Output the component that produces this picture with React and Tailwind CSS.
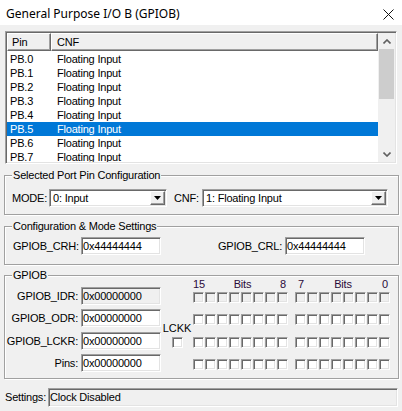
import React from "react";

const SUNKEN =
  "border border-t-[#a0a0a0] border-l-[#a0a0a0] border-r-white border-b-white shadow-[inset_1px_1px_0_#696969,inset_-1px_-1px_0_#e3e3e3]";
const RAISED =
  "border border-t-white border-l-white border-r-[#696969] border-b-[#696969] shadow-[inset_-1px_-1px_0_#a0a0a0]";

function Field({ w, text, gray, h = "h-[18px]" }) {
  return (
    <div
      className={`${w} ${h} ${SUNKEN} ${gray ? "bg-[#f0f0f0]" : "bg-white"} flex items-center pl-[1px] overflow-hidden whitespace-nowrap`}
    >
      {text}
    </div>
  );
}

function Combo({ w, text }) {
  return (
    <div className={`${w} h-[18px] ${SUNKEN} bg-white flex items-center p-[1px]`}>
      <span className="flex-1 pl-[2px] whitespace-nowrap">{text}</span>
      <div className={`w-[15px] h-full ${RAISED} bg-[#f0f0f0] flex items-center justify-center`}>
        <svg width="7" height="4" viewBox="0 0 7 4">
          <path d="M0 0H7L3.5 4Z" fill="#000" />
        </svg>
      </div>
    </div>
  );
}

function Check({ gray }) {
  return (
    <div
      className={`w-[11px] h-[11px] ${SUNKEN} ${gray ? "bg-[#f0f0f0]" : "bg-white"}`}
    />
  );
}

function Bits({ gray }) {
  return (
    <div className="flex gap-[1px]">
      {[0, 1, 2, 3, 4, 5, 6, 7].map((i) => (
        <Check key={i} gray={gray} />
      ))}
    </div>
  );
}

function Group({ title, className, children }) {
  return (
    <div
      className={`relative ml-[4px] w-[395px] border border-[#a0a0a0] shadow-[inset_1px_1px_0_#fff,1px_1px_0_#fff] ${className}`}
    >
      <span className="absolute left-[7px] top-[-7px] bg-[#f0f0f0] px-[1px] leading-[13px] whitespace-nowrap">
        {title}
      </span>
      {children}
    </div>
  );
}

const rows = ["PB.0", "PB.1", "PB.2", "PB.3", "PB.4", "PB.5", "PB.6", "PB.7"];

export default function App() {
  return (
    <div className="w-[402px] h-[411px] bg-[#f0f0f0] font-['Liberation_Sans',Arial,sans-serif] text-[11px] leading-[13px] text-black tracking-[-0.2px] overflow-hidden">
      {/* Title bar */}
      <div className="h-[25px] bg-white flex items-center justify-between pl-[6px] pr-[8px]">
        <span className="font-['Noto_Sans',sans-serif] text-[12px] tracking-normal pt-[2px]">
          General Purpose I/O B (GPIOB)
        </span>
        <svg width="11" height="11" viewBox="0 0 11 11" className="mt-[4px]">
          <path d="M0.5 0.5L10.5 10.5M10.5 0.5L0.5 10.5" stroke="#111" strokeWidth="1" />
        </svg>
      </div>

      {/* List view */}
      <div className={`mt-[6px] ml-[5px] w-[392px] h-[133px] bg-white ${SUNKEN} p-[1px] flex`}>
        <div className="flex-1 flex flex-col overflow-hidden">
          <div className="h-[18px] flex bg-[#f0f0f0] shrink-0">
            <div className={`w-[44px] h-full ${RAISED} flex items-center pl-[4px]`}>Pin</div>
            <div className={`flex-1 h-full ${RAISED} flex items-center pl-[5px]`}>CNF</div>
          </div>
          <div className="pt-[1px]">
            {rows.map((r) => (
              <div
                key={r}
                className={`h-[14px] flex items-center ${r === "PB.5" ? "bg-[#0078d7] text-white" : ""}`}
              >
                <span className="w-[50px] pl-[3px]">{r}</span>
                <span>Floating Input</span>
              </div>
            ))}
          </div>
        </div>
        <div className="w-[17px] bg-[#f0f0f0] flex flex-col">
          <div className="h-[16px] flex items-center justify-center">
            <svg width="8" height="5" viewBox="0 0 8 5">
              <path d="M0.5 4.5L4 1L7.5 4.5" stroke="#606060" strokeWidth="1.6" fill="none" />
            </svg>
          </div>
          <div className="mx-[1px] h-[50px] bg-[#cdcdcd]" />
          <div className="flex-1" />
          <div className="h-[16px] flex items-center justify-center">
            <svg width="8" height="5" viewBox="0 0 8 5">
              <path d="M0.5 0.5L4 4L7.5 0.5" stroke="#606060" strokeWidth="1.6" fill="none" />
            </svg>
          </div>
        </div>
      </div>

      {/* Selected Port Pin Configuration */}
      <Group title="Selected Port Pin Configuration" className="mt-[11px] h-[40px] pt-[13px] pl-[7px]">
        <div className="flex items-center">
          <span className="w-[37px]">MODE:</span>
          <Combo w="w-[118px]" text="0: Input" />
          <span className="ml-[7px] w-[28px]">CNF:</span>
          <Combo w="w-[186px]" text="1: Floating Input" />
        </div>
      </Group>

      {/* Configuration & Mode Settings */}
      <Group title="Configuration & Mode Settings" className="mt-[11px] h-[39px] pt-[10px] pl-[8px]">
        <div className="flex items-center">
          <span className="w-[68px]">GPIOB_CRH:</span>
          <Field w="w-[80px]" text="0x44444444" />
          <span className="ml-[57px] w-[67px]">GPIOB_CRL:</span>
          <Field w="w-[80px]" text="0x44444444" />
        </div>
      </Group>

      {/* GPIOB */}
      <Group title="GPIOB" className="mt-[10px] h-[104px] pt-[2px]">
        <div className="grid grid-cols-[76px_80px_32px_102px_96px] grid-rows-[27px_22px_23px_22px]">
          {/* Row 1: IDR */}
          <div className="self-end h-[18px] flex items-center justify-end pr-[3px]">GPIOB_IDR:</div>
          <div className="self-end">
            <Field w="w-[80px]" text="0x00000000" gray />
          </div>
          <div />
          <div className="flex flex-col">
            <div className="w-[96px] flex justify-between pr-[3px] text-[#2a0a3a]">
              <span>15</span>
              <span>Bits</span>
              <span>8</span>
            </div>
            <div className="mt-[1px]">
              <Bits gray />
            </div>
          </div>
          <div className="flex flex-col">
            <div className="w-[96px] flex justify-between px-[3px] text-[#2a0a3a]">
              <span>7</span>
              <span>Bits</span>
              <span>0</span>
            </div>
            <div className="mt-[1px]">
              <Bits gray />
            </div>
          </div>

          {/* Row 2: ODR */}
          <div className="self-end h-[18px] flex items-center justify-end pr-[3px]">GPIOB_ODR:</div>
          <div className="self-end">
            <Field w="w-[80px]" text="0x00000000" />
          </div>
          <div className="row-span-2 flex flex-col items-center justify-end gap-[2px] pb-[2px] tracking-normal">
            <span>LCKK</span>
            <Check />
          </div>
          <div className="self-end mb-[2px]">
            <Bits />
          </div>
          <div className="self-end mb-[2px]">
            <Bits />
          </div>

          {/* Row 3: LCKR */}
          <div className="self-end h-[18px] flex items-center justify-end pr-[3px]">GPIOB_LCKR:</div>
          <div className="self-end">
            <Field w="w-[80px]" text="0x00000000" />
          </div>
          <div className="self-end mb-[2px]">
            <Bits />
          </div>
          <div className="self-end mb-[2px]">
            <Bits />
          </div>

          {/* Row 4: Pins */}
          <div className="self-end h-[18px] flex items-center justify-end pr-[3px]">Pins:</div>
          <div className="self-end">
            <Field w="w-[80px]" text="0x00000000" />
          </div>
          <div />
          <div className="self-end mb-[2px]">
            <Bits />
          </div>
          <div className="self-end mb-[2px]">
            <Bits />
          </div>
        </div>
      </Group>

      {/* Settings */}
      <div className="mt-[9px] pl-[5px] flex items-center">
        <span className="w-[43px]">Settings:</span>
        <Field w="w-[350px]" h="h-[19px]" text="Clock Disabled" gray />
      </div>
    </div>
  );
}
